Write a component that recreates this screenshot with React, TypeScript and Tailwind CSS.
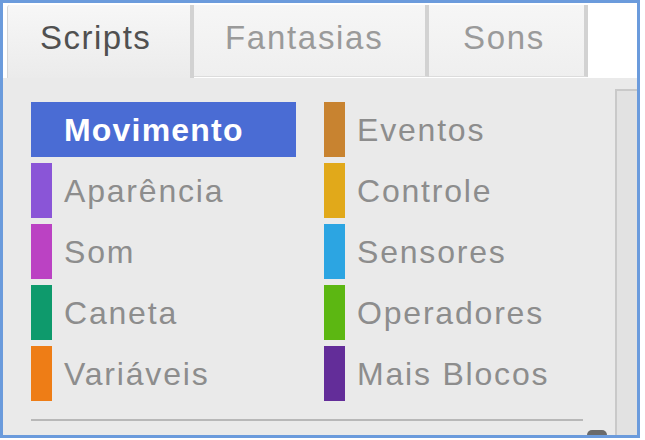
import React from "react";

type Category = { name: string; color: string };

const leftColumn: Category[] = [
  { name: "Movimento", color: "#4a6cd4" },
  { name: "Aparência", color: "#8a55d7" },
  { name: "Som", color: "#bb42c3" },
  { name: "Caneta", color: "#0e9a6c" },
  { name: "Variáveis", color: "#ee7d16" },
];

const rightColumn: Category[] = [
  { name: "Eventos", color: "#c88330" },
  { name: "Controle", color: "#e1a91a" },
  { name: "Sensores", color: "#2ca5e2" },
  { name: "Operadores", color: "#5cb712" },
  { name: "Mais Blocos", color: "#632d99" },
];

const font = { fontFamily: '"Liberation Sans", Arial, sans-serif' };

function CategoryRow({ item, selected }: { item: Category; selected?: boolean }) {
  if (selected) {
    return (
      <div className="h-[55px] flex items-center bg-[#4a6cd4] pl-[33px]">
        <span className="text-[32px] font-bold text-white tracking-[1.2px] leading-none">{item.name}</span>
      </div>
    );
  }
  return (
    <div className="h-[55px] flex items-center">
      <div className="w-[21px] h-full shrink-0" style={{ backgroundColor: item.color }} />
      <span className="ml-[12px] text-[32px] text-[#8d8d8d] tracking-[1.8px] leading-none">{item.name}</span>
    </div>
  );
}

export default function App() {
  const rows = leftColumn.map((l, i) => [l, rightColumn[i]] as const);
  return (
    <div className="w-[645px] h-[440px] bg-white" style={font}>
      <div className="relative w-[640px] h-[438px] border-[3px] border-[#6b9bdc] bg-white flex flex-col overflow-hidden">
        {/* tab strip */}
        <div className="h-[75px] flex pl-[4px] pt-[2px] shrink-0">
          <div className="w-[187px] rounded-tl-[3px] border-l border-[#d6d6d6] border-r-[4px] border-r-[#d2d2d2] bg-gradient-to-b from-[#f7f7f7] to-[#ebebeb] pl-[32px] pt-[16px]">
            <span className="text-[33px] text-[#505050] tracking-[1.5px] leading-none">Scripts</span>
          </div>
          <div className="w-[235px] mb-[1px] border-r-[4px] border-r-[#d2d2d2] border-b border-b-[#dcdcdc] bg-gradient-to-b from-[#f6f6f6] to-[#efefef] pl-[31px] pt-[16px]">
            <span className="text-[33px] text-[#9a9a9a] tracking-[1.7px] leading-none">Fantasias</span>
          </div>
          <div className="w-[159px] mb-[1px] border-r-[4px] border-r-[#d2d2d2] border-b border-b-[#dcdcdc] bg-gradient-to-b from-[#f6f6f6] to-[#efefef] pl-[34px] pt-[16px]">
            <span className="text-[33px] text-[#9a9a9a] tracking-[1.7px] leading-none">Sons</span>
          </div>
          <div className="flex-1 bg-white" />
        </div>

        {/* palette body */}
        <div className="flex-1 flex bg-[#eaeaea]">
          <div className="flex-1 pl-[28px] pt-[24px]">
            <div className="grid grid-cols-[265px_259px] gap-x-[28px] gap-y-[6px]">
              {rows.map(([l, r], i) => (
                <React.Fragment key={l.name}>
                  <CategoryRow item={l} selected={i === 0} />
                  <CategoryRow item={r} />
                </React.Fragment>
              ))}
            </div>
            <div className="mt-[18px] w-[552px] h-[2px] bg-[#b8b8b8]" />
          </div>
          <div className="w-[22px] mt-[11px] border-l-2 border-t-2 border-[#c9c9c9] bg-[#e2e2e2]" />
        </div>

        {/* scroll grip peeking at the bottom edge */}
        <div className="absolute left-[584px] bottom-0 w-[20px] h-[5px] rounded-t-full bg-[#6a6a6a]" />
      </div>
    </div>
  );
}
